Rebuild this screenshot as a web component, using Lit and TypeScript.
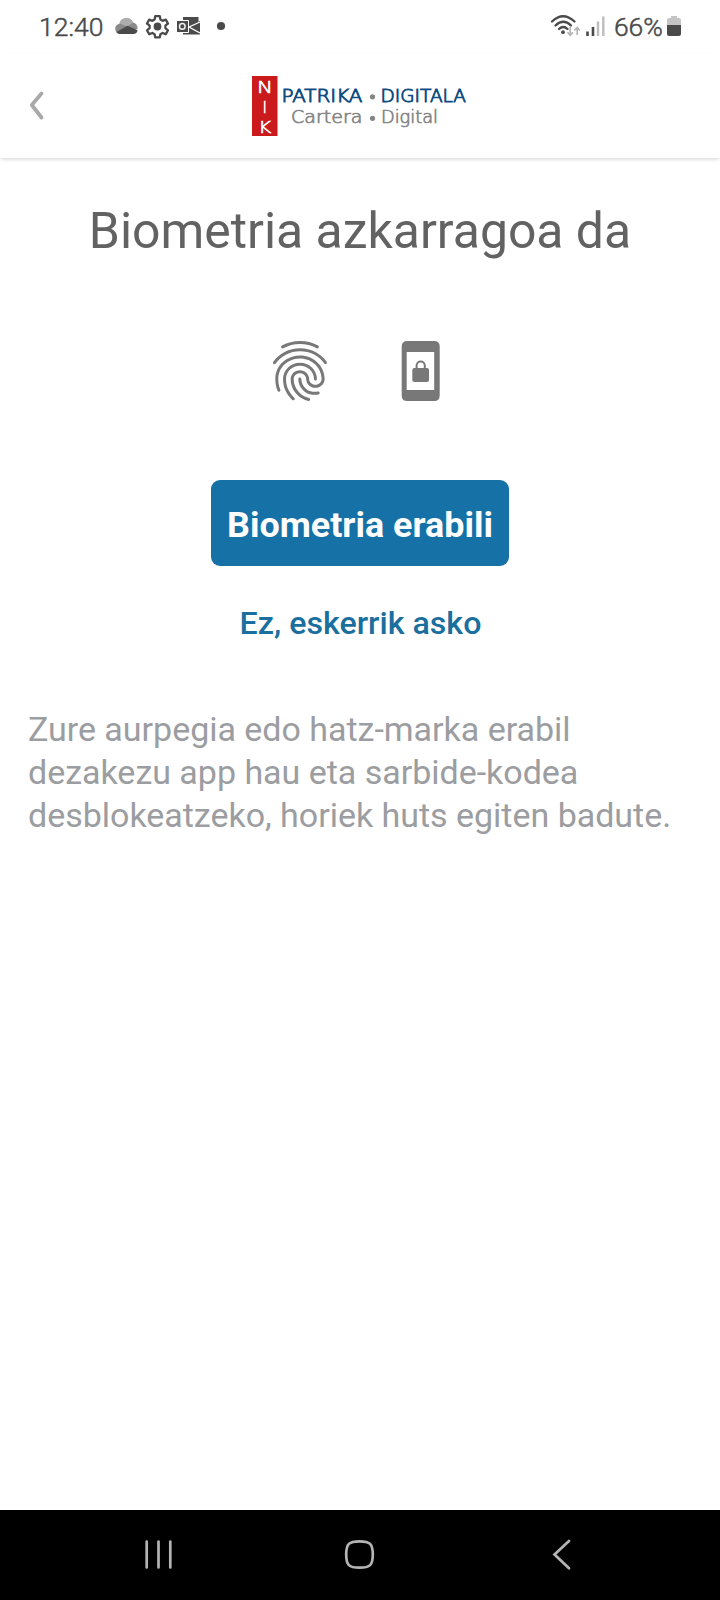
import { LitElement, html, css } from "lit";
import { customElement } from "lit/decorators.js";

@customElement("status-bar")
class StatusBar extends LitElement {
  static styles = css`
    :host { display: block; height: 54px; color: #4a4a4a; }
    .bar { display: flex; justify-content: space-between; height: 54px; padding: 0 38px 0 39px; font: 300 26.500px/54px Roboto, sans-serif; -webkit-text-stroke: 0.5px #4a4a4a; }
    .side { display: flex; align-items: flex-start; }
    .time { width: 75px; }
    .pct { width: 53px; letter-spacing: -0.1px; }
    svg { display: block; }
  `;
  render() {
    return html`<div class="bar">
      <div class="side">
        <span class="time">12:40</span>
        <svg width="126" height="54" viewBox="114 0 126 54">
          <path d="M120 34a5.2 5.2 0 0 1-.5-10.300a7.200 7.200 0 0 1 13.500-1.200a5.700 5.700 0 0 1 4.500 6.500z" fill="#8a8a8a"/>
          <path d="M119.300 23.300a7.300 7.300 0 0 1 13.700-.8l-5.500 4z" fill="#adadad"/>
          <path d="M116.500 32l11-6.200l10 4.400a4.200 4.200 0 0 1-3.500 3.800h-14a5 5 0 0 1-3.500-2z" fill="#4a4a4a"/>
          <path d="M154.600 19.500l.6-3.400h4.600l.6 3.400l2.200 1.300l3.200-1.200l2.200 3.900l-2.600 2.100v2.600l2.600 2.100l-2.200 3.900l-3.200-1.200l-2.200 1.300l-.6 3h-4.600l-.6-3l-2.200-1.300l-3.200 1.200l-2.200-3.900l2.600-2.100v-2.600l-2.600-2.100l2.200-3.900l3.200 1.200z" fill="none" stroke="#4a4a4a" stroke-width="2.300" stroke-linejoin="round"/>
          <circle cx="157.500" cy="26.500" r="3.900" fill="#4a4a4a"/>
          <path d="M183 17h15.500v9.500l-7.500 0l9 5.500v2.500h-17z" fill="#4a4a4a"/>
          <path d="M188.500 26.500l11.500-5.500v11.500z" fill="#4a4a4a"/>
          <path d="M200 22l-11 5l11 6" fill="none" stroke="#fff" stroke-width="1.300"/>
          <path d="M176.500 20.500h12v12h-12z" fill="#4a4a4a" stroke="#fff" stroke-width="1"/>
          <circle cx="182.300" cy="26.400" r="2.800" fill="none" stroke="#eee" stroke-width="1.500"/>
          <circle cx="221" cy="26" r="4.100" fill="#4a4a4a"/>
        </svg>
      </div>
      <div class="side">
        <svg width="66" height="54" viewBox="548 0 66 54">
          <g fill="none" stroke="#4a4a4a" stroke-width="2.300" stroke-linecap="round">
            <path d="M552 21.500q11-10.500 22.500 0"/><path d="M555.500 25.500q7.800-7.500 15.500 0"/><path d="M559 29q4.300-4 8.500 0"/>
          </g>
          <circle cx="563" cy="32.200" r="1.900" fill="#4a4a4a"/>
          <path d="M570.200 27v8M567.500 32.200l2.700 3l2.700-3M577.200 35v-7M574.500 30.500l2.700-3l2.700 3" fill="none" stroke="#b5b5b5" stroke-width="1.700"/>
          <path d="M587.500 36v-4.500M593 36v-9" stroke="#4a4a4a" stroke-width="2.600"/>
          <path d="M598 36v-14.500M603.300 36v-19.500" stroke="#bdbdbd" stroke-width="2.400"/>
        </svg>
        <span class="pct">66%</span>
        <svg width="15" height="54" viewBox="667 0 15 54">
          <path d="M667 25v-5q0-2 2-2h2v-2h6v2h2q2 0 2 2v5z" fill="#c4c4c4"/>
          <path d="M667 25h14v9q0 2-2 2h-10q-2 0-2-2z" fill="#4a4a4a"/>
        </svg>
      </div>
    </div>`;
  }
}

@customElement("app-header")
class AppHeader extends LitElement {
  static styles = css`
    :host { display: block; }
    .head { display: grid; grid-template-columns: 252px 216px 1fr; height: 104px; background: #fff; box-shadow: 0 2px 4px -1px rgba(0, 0, 0, 0.18); }
    svg { display: block; }
    .n { font: 200 15px "DejaVu Sans", sans-serif; fill: #fff; stroke: #fff; stroke-width: 0.6px; }
    .eu { font: 200 17.500px "DejaVu Sans", sans-serif; fill: #0f4c81; stroke: #0f4c81; stroke-width: 0.9px; }
    .es { font: 200 17.500px "DejaVu Sans", sans-serif; fill: #858585; stroke: #858585; stroke-width: 0.7px; }
  `;
  render() {
    return html`<div class="head">
      <svg width="252" height="104" viewBox="0 54 252 104">
        <path d="M41.500 93.500L31.800 105l9.700 12.500" fill="none" stroke="#a9a9a9" stroke-width="3.800" stroke-linecap="round" stroke-linejoin="round"/>
      </svg>
      <svg width="216" height="104" viewBox="252 54 216 104">
        <rect x="252" y="76" width="25.500" height="60" fill="#cb1a1c"/>
        <text class="n" x="257" y="92.500" textLength="16" lengthAdjust="spacingAndGlyphs">N</text>
        <text class="n" x="262.600" y="112.800">I</text>
        <text class="n" x="258.300" y="132.500" textLength="13" lengthAdjust="spacingAndGlyphs">K</text>
        <text class="eu" x="281.500" y="101.500" textLength="81" lengthAdjust="spacingAndGlyphs">PATRIKA</text>
        <circle cx="372.500" cy="96.800" r="2.600" fill="#858585"/>
        <text class="eu" x="380.500" y="101.500" textLength="85.500" lengthAdjust="spacingAndGlyphs">DIGITALA</text>
        <text class="es" x="291" y="123" textLength="71.500" lengthAdjust="spacingAndGlyphs">Cartera</text>
        <circle cx="372.500" cy="118.300" r="2.600" fill="#858585"/>
        <text class="es" x="381" y="123" textLength="57" lengthAdjust="spacingAndGlyphs">Digital</text>
      </svg>
    </div>`;
  }
}

@customElement("nav-bar")
class NavBar extends LitElement {
  static styles = css`
    :host { display: block; height: 90px; background: #000; }
    svg { display: block; }
  `;
  render() {
    return html`<svg width="720" height="90" viewBox="0 1510 720 90" fill="none" stroke="#b4b4b4" stroke-width="2.700" stroke-linecap="round">
      <path d="M146.700 1541.500v26M158.500 1541.500v26M170.300 1541.500v26"/>
      <path d="M359.500 1541.300c10.500 0 13.300 2.500 13.300 13.200s-2.800 13.200-13.300 13.200s-13.300-2.500-13.300-13.200s2.800-13.200 13.300-13.200z"/>
      <path d="M569 1541l-14.500 13.500l14.500 13.800"/>
    </svg>`;
  }
}

@customElement("app-root")
class AppRoot extends LitElement {
  static styles = css`
    :host { display: block; font-family: Roboto, sans-serif; }
    .page { display: flex; flex-direction: column; height: 1600px; background: #fff; }
    main { flex: 1; display: flex; flex-direction: column; align-items: center; }
    h1 { margin: 43px 0 0; font-size: 49.900px; line-height: 60px; font-weight: 400; color: #626262; white-space: nowrap; }
    .icons { display: flex; gap: 48px; margin-top: 74px; }
    .icons svg { display: block; fill: #787878; }
    .primary { box-sizing: border-box; margin-top: 73px; width: 298px; height: 86px; padding: 4px 0 0; border: 0; border-radius: 9px; background: #1671a6; color: #fff; font: 700 35.900px/82px Roboto, sans-serif; white-space: nowrap; }
    .link { margin-top: 36px; padding: 0 0 0 1px; border: 0; background: none; color: #1b6f9f; font: 500 32.200px/42px Roboto, sans-serif; white-space: nowrap; }
    p { align-self: stretch; margin: 64px 28px 0; font-size: 34px; line-height: 43px; letter-spacing: -0.02px; color: #9b9da1; white-space: nowrap; }
  `;
  render() {
    return html`<div class="page">
      <status-bar></status-bar>
      <app-header></app-header>
      <main>
        <h1>Biometria azkarragoa da</h1>
        <div class="icons">
          <svg width="72" height="72" viewBox="0 0 24 24"><path d="M17.81 4.47c-.08 0-.16-.02-.23-.06C15.66 3.42 14 3 12.01 3c-1.98 0-3.86.47-5.57 1.41-.24.13-.54.04-.68-.2-.13-.24-.04-.55.2-.68C7.82 2.52 9.86 2 12.01 2c2.13 0 3.99.47 6.03 1.52.25.13.34.43.21.67-.09.18-.26.28-.44.28zM3.5 9.72c-.1 0-.2-.03-.29-.09-.23-.16-.28-.47-.12-.7.99-1.4 2.25-2.5 3.75-3.27C9.98 4.04 14 4.03 17.15 5.65c1.500.77 2.760 1.860 3.750 3.250.16.22.11.54-.12.7-.23.16-.54.11-.7-.12-.9-1.260-2.040-2.250-3.390-2.940-2.870-1.470-6.540-1.470-9.400.01-1.360.7-2.500 1.700-3.400 2.960-.08.14-.23.21-.39.21zm6.250 12.070c-.13 0-.26-.05-.35-.15-.87-.87-1.340-1.430-2.010-2.640-.69-1.230-1.050-2.730-1.050-4.340 0-2.970 2.540-5.390 5.660-5.390s5.660 2.420 5.660 5.390c0 .28-.22.5-.5.5s-.5-.22-.5-.5c0-2.420-2.090-4.390-4.660-4.390-2.570 0-4.660 1.970-4.660 4.390 0 1.440.32 2.770.93 3.850.64 1.150 1.080 1.640 1.850 2.420.19.2.19.51 0 .71-.11.1-.24.15-.37.15zm7.170-1.850c-1.190 0-2.240-.3-3.100-.89-1.490-1.010-2.380-2.650-2.380-4.390 0-.28.22-.5.5-.5s.5.22.5.5c0 1.410.72 2.740 1.940 3.560.71.48 1.540.71 2.540.71.24 0 .64-.03 1.040-.1.27-.05.53.13.58.41.05.27-.13.53-.41.58-.57.11-1.070.12-1.210.12zM14.910 22c-.04 0-.09-.01-.13-.02-1.590-.44-2.630-1.030-3.720-2.100-1.400-1.390-2.170-3.240-2.170-5.220 0-1.620 1.380-2.940 3.080-2.940 1.700 0 3.080 1.320 3.080 2.940 0 1.070.93 1.940 2.080 1.940s2.080-.87 2.080-1.940c0-3.770-3.250-6.830-7.250-6.830-2.840 0-5.440 1.580-6.610 4.030-.39.81-.59 1.760-.59 2.800 0 .78.07 2.010.67 3.610.1.26-.03.55-.29.64-.26.1-.55-.04-.64-.29-.49-1.310-.73-2.610-.73-3.960 0-1.200.23-2.290.68-3.240 1.330-2.790 4.280-4.600 7.510-4.600 4.550 0 8.250 3.510 8.250 7.830 0 1.620-1.380 2.940-3.080 2.940s-3.080-1.320-3.080-2.940c0-1.070-.93-1.940-2.080-1.940s-2.080.87-2.080 1.940c0 1.710.66 3.310 1.870 4.510.95.94 1.860 1.460 3.270 1.850.27.07.42.35.35.61-.05.23-.26.38-.47.38z"/></svg>
          <svg width="72" height="72" viewBox="384 335 72 72">
            <path fill-rule="evenodd" d="M407.200 341h27q5.500 0 5.500 5.500v49q0 5.500-5.500 5.500h-27q-5.500 0-5.500-5.500v-49q0-5.500 5.500-5.500zM406.700 352v38h27.500v-38z"/>
            <rect x="412.300" y="368" width="16.700" height="14" rx="2"/>
            <path d="M416.600 369v-3.500a4.100 4.100 0 0 1 8.200 0v3.500" fill="none" stroke="#787878" stroke-width="2"/>
          </svg>
        </div>
        <button class="primary">Biometria erabili</button>
        <button class="link">Ez, eskerrik asko</button>
        <p>Zure aurpegia edo hatz-marka erabil<br>dezakezu app hau eta sarbide-kodea<br>desblokeatzeko, horiek huts egiten badute.</p>
      </main>
      <nav-bar></nav-bar>
    </div>`;
  }
}
